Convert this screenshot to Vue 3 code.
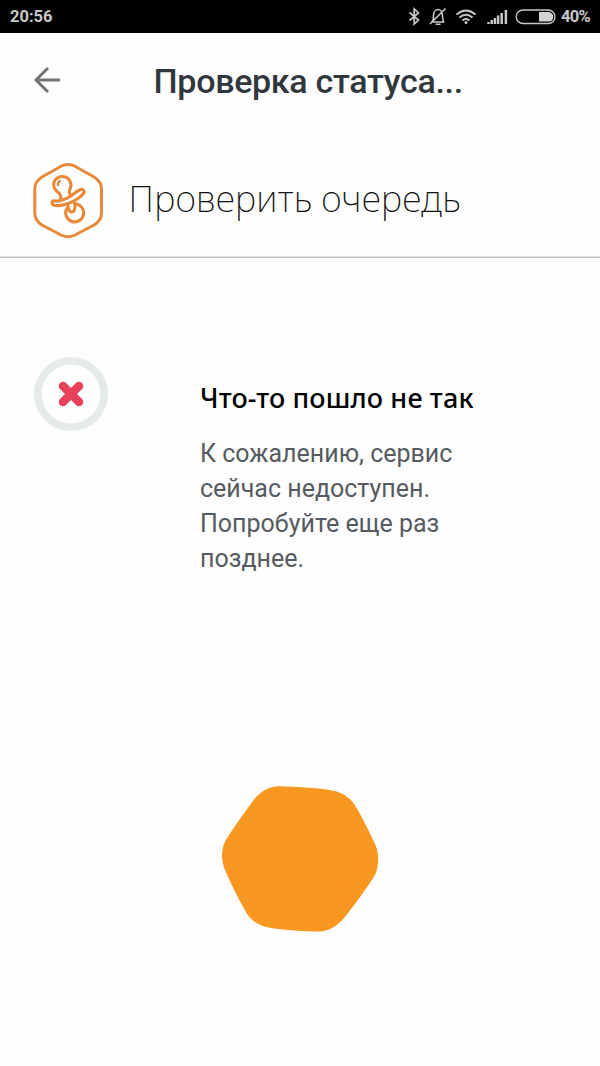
<script setup>
const message = ['К сожалению, сервис', 'сейчас недоступен.', 'Попробуйте еще раз', 'позднее.']
</script>

<template>
  <div class="screen">
    <header class="status">
      <span class="clock">20:56</span>
      <svg class="indicators" width="160" height="33" viewBox="400 0 160 33" fill="none" stroke="#c8c8c8">
        <path d="M409.500 12.500l9 7.500-4.300 4V9l4.300 4-9 7.500" stroke-width="1.700" />
        <path d="M431 22h13.500M432.500 21.500c1-1.500 1-3 1-6 0-3.500 2-6 4.500-6s4.500 2.500 4.500 6c0 3 0 4.500 1 6M435.500 24.200h5M430 24L445.500 8.500" stroke-width="1.600" />
        <path d="M456.500 14.500q9.500-8 19 0M459.500 17.500q6.500-5.500 13 0M462.500 20.500q3.500-3 7 0" stroke-width="2" />
        <circle cx="466" cy="22.500" r="1.500" fill="#c8c8c8" stroke="none" />
        <path d="M488.500 24v-2M491.700 24v-4M494.900 24v-6M498.100 24v-8.500M501.700 24v-11M505.900 24V10" stroke-width="2.500" />
        <rect x="516.200" y="10" width="38.800" height="13.500" rx="6.750" stroke-width="1.300" />
        <path d="M539 12h9.500a4.800 4.800 0 0 1 0 9.600H539z" fill="#d2d2d2" stroke="none" />
      </svg>
      <span class="percent">40%</span>
    </header>

    <nav class="toolbar">
      <svg class="back" width="28" height="28" viewBox="0 0 28 28" fill="none" stroke="#757575" stroke-width="2.900">
        <path d="M27 14H3M15 2L3 14l12 12" />
      </svg>
      <h1>Проверка статуса...</h1>
    </nav>

    <section class="service">
      <svg class="badge" width="74" height="80" viewBox="31 160 74 80" fill="none" stroke="#e8893a" stroke-linecap="round" stroke-linejoin="round">
        <path d="M61 166.200Q68 163 75 166.200L94 177Q101.500 181.500 101.500 189V213Q101.500 220.500 94 225L75 235Q68 238.400 61 235L42 225Q34.800 220.500 34.800 213V189Q34.800 181.500 42 177Z" stroke-width="3" />
        <path d="M60.700 199.500V196C60.500 193.500 58.500 192.500 56.700 191.200C53.500 188.500 53 184 54.500 181C56.500 177.500 60 176.500 62.500 176.500C67.500 176.500 71 180.500 71 185C71 188 69 190 69.300 192C69.500 193.500 70 194.500 71 195.500" stroke-width="3.100" />
        <path d="M58 185q-.3-2.600 1.700-4" stroke-width="2.500" />
        <path d="M54 200.800C57 201.500 63 200.300 67 198.200C72 195.800 76 191.500 80 189.800C83.500 188.500 85.200 191.500 83 194C79 198.500 74 201.300 69 203.200C64 205 57 206 54 205.200C51.500 204.500 51.500 201 54 200.800Z" stroke-width="3.100" />
        <path d="M66.800 208.500A9 9 0 1 0 76 204" stroke-width="3.100" />
        <path d="M67.700 205C68.500 209 69 211.800 71.500 212C74.500 212 75.500 209 74.700 203" stroke-width="3" />
      </svg>
      <h2>Проверить очередь</h2>
    </section>

    <main class="result">
      <svg class="error" width="76" height="76" viewBox="0 0 76 76" fill="none">
        <circle cx="38" cy="38" r="33.200" stroke="#e4ebe9" stroke-width="7.600" />
        <path d="M30 30l16 16M46 30L30 46" stroke="#e8415b" stroke-width="8.500" stroke-linecap="round" />
      </svg>
      <div class="copy">
        <h3>Что-то пошло не так</h3>
        <p><span v-for="line in message" :key="line">{{ line }}</span></p>
      </div>
    </main>

    <svg class="loader" width="160" height="150" viewBox="220 783 160 150">
      <path d="M280 786.200C295 786.500 315 787.600 331 790.200C341 792 349 796 355.500 806C362 817 368 829 375.500 845C379 853 379.500 865 375 875C367 888 356 903 344.500 917.500C338 925 330 931.500 319 931.500C303 931.500 285 930 271 928C261 926.500 252 922 246.500 913C239 900 232 886 225 870C221 860 221 849 225.500 840.500C234 827 244 813 254 799.500C261 791 269 786 280 786.200Z" fill="#f99820" />
    </svg>
  </div>
</template>

<style>
body { background: #fefefe; }
</style>

<style scoped>
.screen {
  height: 1066px;
  overflow: hidden;
  background: #fefefe;
  font-family: Roboto, sans-serif;
}
h1, h2, h3, p { margin: 0; white-space: nowrap; }
.status {
  height: 33px;
  display: flex;
  align-items: center;
  background: #000;
  color: #c8c8c8;
  font-size: 16.500px;
  font-weight: 700;
  line-height: 33px;
}
.clock { width: 390px; padding-left: 10px; }
.percent { letter-spacing: -0.700px; padding-left: 1px; }
.toolbar { height: 95px; display: flex; align-items: flex-start; }
.back { margin: 33px 0 0 33px; }
h1 {
  margin: 28px 0 0 92.500px;
  color: #30383d;
  font-size: 34px;
  font-weight: 500;
  letter-spacing: -0.300px;
  line-height: 40px;
}
.service {
  height: 130px;
  box-sizing: border-box;
  display: flex;
  align-items: flex-start;
  border-bottom: 1px solid #bdbdbd;
  box-shadow: inset 0 -1px 0 #e2e2e2;
}
.badge { margin: 32px 0 0 31px; }
h2 {
  margin: 46px 0 0 23.500px;
  color: #111;
  font-family: "Noto Sans", sans-serif;
  font-size: 36px;
  font-weight: 220;
  letter-spacing: 0.300px;
  word-spacing: -1px;
  line-height: 50px;
}
.result { display: flex; height: 525px; align-items: flex-start; }
.error { margin: 98px 0 0 33px; }
.copy { margin: 122px 0 0 91px; }
h3 {
  color: #000;
  font-family: "Noto Sans", sans-serif;
  font-size: 27px;
  font-weight: 500;
  letter-spacing: 0.150px;
  line-height: 36px;
}
p { margin-top: 20px; color: #555b60; font-size: 25px; line-height: 35px; }
p span { display: block; }
.loader { display: block; margin-left: 220px; }
</style>
